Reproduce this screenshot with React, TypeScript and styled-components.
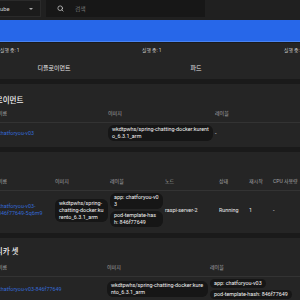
import React from "react";
import styled, {createGlobalStyle} from "styled-components";
import {Search} from "lucide-react";

const GlobalStyle = createGlobalStyle`
  html, body {
    margin: 0;
    padding: 0;
    background: #1a1a1a;
    font-family: Roboto, "Noto Sans CJK KR", sans-serif;
    overflow: hidden;
  }
`;

const Page = styled.div`
  width: 300px;
  height: 300px;
  overflow: hidden;
  background: #1a1a1a;
`;

const TopBar = styled.div`
  display: flex;
  align-items: center;
  height: 20px;
  background: #202020;
  gap: 5px;
`;

const NamespaceSelect = styled.div`
  display: flex;
  align-items: center;
  justify-content: space-between;
  width: 41px;
  height: 17px;
  box-sizing: border-box;
  margin-top: -3px;
  padding: 0 7px 0 0;
  background: #1b1b1b;
  border: 1px solid #2a2a2a;
  border-left: none;
  color: #cfcfcf;
  font-size: 5.8px;
`;

const Caret = styled.span`
  width: 0;
  height: 0;
  border-left: 2px solid transparent;
  border-right: 2px solid transparent;
  border-top: 2px solid #aaa;
`;

const SearchField = styled.div`
  display: flex;
  align-items: center;
  gap: 11px;
  width: 159px;
  height: 17px;
  margin-top: -3px;
  padding-left: 11px;
  box-sizing: border-box;
  background: #171717;
  color: #777;
  font-size: 5.8px;
`;

const ActionBar = styled.div`
  height: 21px;
  background: #2767e9;
  border-bottom: 1px solid #4a84f0;
  margin-bottom: 1px;
`;

const Main = styled.div`
  display: flex;
  flex-direction: column;
  gap: 5px;
  margin-left: -16px;
`;

const Card = styled.section<{$h?: number}>`
  background: #252525;
  padding-bottom: 4px;
  ${(p) => (p.$h ? `height: ${p.$h}px; box-sizing: border-box;` : "")}
`;

const StatusRow = styled.div`
  display: grid;
  grid-template-columns: repeat(3, 142px);
  padding-left: 16px;
`;

const StatusCol = styled.div`
  display: flex;
  flex-direction: column;
`;

const Legend = styled.div`
  padding-top: 3px;
  font-size: 4.8px;
  color: #d6d6d6;
  height: 10px;
`;

const ChartLabel = styled.div`
  width: 108px;
  text-align: center;
  margin-top: 7px;
  font-size: 6px;
  color: #e8e8e8;
`;

const Title = styled.h2<{$pt: number}>`
  margin: 0;
  padding: ${(p) => p.$pt}px 0 0 0;
  margin-left: -2px;
  height: 24px;
  box-sizing: border-box;
  font-size: 7.5px;
  font-weight: 500;
  color: #f2f2f2;
`;

const Table = styled.div<{$cols: string}>`
  display: grid;
  grid-template-columns: ${(p) => p.$cols};
  padding-left: 14px;
  align-items: center;
`;

const HeadCell = styled.div`
  font-size: 5px;
  color: #a8a8a8;
  height: 14px;
  line-height: 10px;
  border-bottom: 1px solid #333;
  white-space: nowrap;
`;

const Cell = styled.div`
  font-size: 5.4px;
  line-height: 7px;
  color: #ececec;
  padding: 2px 2px 2px 0;
  display: flex;
  flex-direction: column;
  align-items: flex-start;
  gap: 2px;
`;

const Link = styled.span`
  color: #3469d6;
  overflow-wrap: anywhere;
`;

const Chip = styled.span`
  background: #161616;
  color: #f4f4f4;
  border-radius: 6px;
  padding: 1px 4px;
  word-break: break-all;
  font-size: 5.4px;
  line-height: 7px;
`;

const IMAGE = "wkdtpwhs/spring-chatting-docker:kurento_6.3.1_arm";

const App: React.FC = () => {
  return (
    <Page>
      <GlobalStyle />
      <TopBar>
        <NamespaceSelect>
          ube
          <Caret />
        </NamespaceSelect>
        <SearchField>
          <Search size={7} color="#cfcfcf" strokeWidth={2.5} />
          검색
        </SearchField>
      </TopBar>
      <ActionBar />
      <Main>
        <Card $h={36}>
          <StatusRow>
            {["디플로이먼트", "파드", "레플리카 셋"].map((name) => (
              <StatusCol key={name}>
                <Legend>실행 중: 1</Legend>
                <ChartLabel>{name}</ChartLabel>
              </StatusCol>
            ))}
          </StatusRow>
        </Card>

        <Card>
          <Title $pt={10}>디플로이먼트</Title>
          <Table $cols="110px 107px 1fr">
            <HeadCell>이름</HeadCell>
            <HeadCell>이미지</HeadCell>
            <HeadCell>레이블</HeadCell>
            <Cell>
              <Link>chatforyou-v03</Link>
            </Cell>
            <Cell>
              <Chip>{IMAGE}</Chip>
            </Cell>
            <Cell>-</Cell>
          </Table>
        </Card>

        <Card>
          <Title $pt={10}>파드</Title>
          <Table $cols="57px 55px 55px 54px 30px 24px 1fr">
            <HeadCell>이름</HeadCell>
            <HeadCell>이미지</HeadCell>
            <HeadCell>레이블</HeadCell>
            <HeadCell>노드</HeadCell>
            <HeadCell>상태</HeadCell>
            <HeadCell>재시작</HeadCell>
            <HeadCell>CPU 사용량</HeadCell>
            <Cell>
              <Link>chatforyou-v03-846f77649-5q6m9</Link>
            </Cell>
            <Cell>
              <Chip>{IMAGE}</Chip>
            </Cell>
            <Cell>
              <Chip>app: chatforyou-v03</Chip>
              <Chip>pod-template-hash: 846f77649</Chip>
            </Cell>
            <Cell>raspi-server-2</Cell>
            <Cell>Running</Cell>
            <Cell>1</Cell>
            <Cell>-</Cell>
          </Table>
        </Card>

        <Card>
          <Title $pt={7}>레플리카 셋</Title>
          <Table $cols="109px 103px 1fr">
            <HeadCell>이름</HeadCell>
            <HeadCell>이미지</HeadCell>
            <HeadCell>레이블</HeadCell>
            <Cell>
              <Link>chatforyou-v03-846f77649</Link>
            </Cell>
            <Cell>
              <Chip>{IMAGE}</Chip>
            </Cell>
            <Cell>
              <Chip>app: chatforyou-v03</Chip>
              <Chip>pod-template-hash: 846f77649</Chip>
            </Cell>
          </Table>
        </Card>
      </Main>
    </Page>
  );
};

export default App;
